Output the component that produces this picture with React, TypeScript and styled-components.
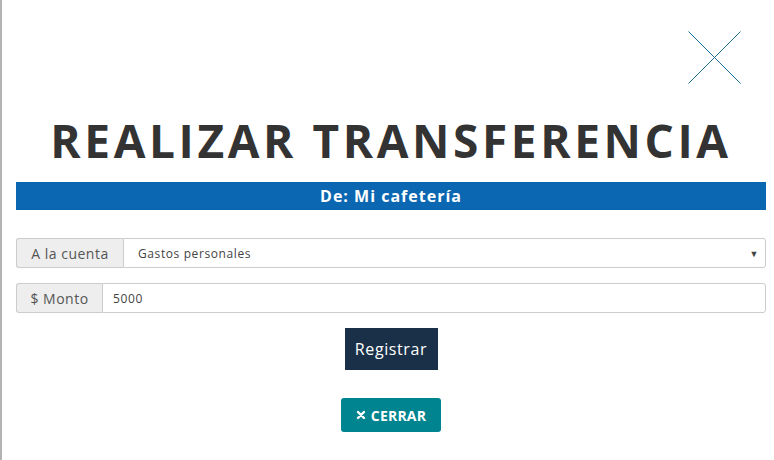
import React from "react";
import styled, { createGlobalStyle } from "styled-components";

const Global = createGlobalStyle`
  html, body { margin: 0; padding: 0; background: #fff; }
  body { font-family: "Open Sans", "Liberation Sans", sans-serif; }
  * { box-sizing: border-box; }
`;

const Page = styled.div`
  height: 460px;
  border-left: 2px solid #b3b3b3;
  padding: 0 8px 0 14px;
  display: flex;
  flex-direction: column;
`;

const TopBar = styled.div`
  display: flex;
  justify-content: flex-end;
  padding: 31px 25px 0 0;
  height: 84px;
`;

const CloseIcon = styled.svg`
  display: block;
  width: 53px;
  height: 53px;
`;

const Title = styled.h1`
  margin: 0;
  text-align: center;
  font-family: "Open Sans", sans-serif;
  font-weight: 700;
  font-size: 46px;
  line-height: 70px;
  color: #333;
  letter-spacing: 3.6px;
  height: 98px;
  padding-top: 21px;
  white-space: nowrap;
`;

const FromBar = styled.div`
  height: 28px;
  background: #0b67b2;
  color: #fff;
  font-family: "Open Sans", sans-serif;
  font-weight: 700;
  font-size: 16px;
  letter-spacing: 1px;
  display: flex;
  align-items: center;
  justify-content: center;
  margin-bottom: 28px;
`;

const Group = styled.div<{ $gap: number }>`
  display: flex;
  height: 30px;
  margin-bottom: ${(p) => p.$gap}px;
`;

const Addon = styled.div<{ $w: number }>`
  width: ${(p) => p.$w}px;
  flex: none;
  background: #eee;
  border: 1px solid #ccc;
  border-right: none;
  border-radius: 3px 0 0 3px;
  color: #555;
  font-size: 14px;
  letter-spacing: 0.5px;
  display: flex;
  align-items: center;
  justify-content: center;
`;

const Field = styled.div<{ $pl: number }>`
  flex: 1;
  border: 1px solid #ccc;
  border-radius: 0 3px 3px 0;
  display: flex;
  align-items: center;
  justify-content: space-between;
  padding: 0 6px 0 ${(p) => p.$pl}px;
  font-size: 12px;
  letter-spacing: 0.6px;
  color: #444;
`;

const Arrow = styled.span`
  font-size: 9px;
  color: #444;
`;

const Center = styled.div<{ $mb: number }>`
  display: flex;
  justify-content: center;
  margin-bottom: ${(p) => p.$mb}px;
`;

const Primary = styled.button`
  width: 93px;
  height: 42px;
  border: none;
  background: #1a3048;
  color: #fff;
  font-family: "Open Sans", sans-serif;
  font-size: 16px;
  letter-spacing: 0.6px;
  padding: 0;
`;

const Teal = styled.button`
  width: 100px;
  height: 34px;
  border: none;
  border-radius: 3px;
  background: #00848f;
  color: #fff;
  font-family: "Open Sans", sans-serif;
  font-weight: 700;
  font-size: 14px;
  letter-spacing: 0.2px;
  display: flex;
  align-items: center;
  justify-content: center;
  gap: 5px;
  padding: 0;
`;

export default function App() {
  return (
    <>
      <Global />
      <Page>
        <TopBar>
          <CloseIcon viewBox="0 0 53 53">
            <line x1="0.5" y1="0.5" x2="52.5" y2="52.5" stroke="#1a6f9b" strokeWidth="1" />
            <line x1="52.5" y1="0.5" x2="0.5" y2="52.5" stroke="#1a6f9b" strokeWidth="1" />
          </CloseIcon>
        </TopBar>
        <Title>REALIZAR TRANSFERENCIA</Title>
        <FromBar>De: Mi cafetería</FromBar>
        <Group $gap={15}>
          <Addon $w={107}>A la cuenta</Addon>
          <Field $pl={14}>
            <span>Gastos personales</span>
            <Arrow>▼</Arrow>
          </Field>
        </Group>
        <Group $gap={15}>
          <Addon $w={86}>$ Monto</Addon>
          <Field $pl={10}>
            <span>5000</span>
          </Field>
        </Group>
        <Center $mb={28}>
          <Primary>Registrar</Primary>
        </Center>
        <Center $mb={0}>
          <Teal>
            <svg width="10" height="10" viewBox="0 0 10 10">
              <path d="M2 2 L8 8 M8 2 L2 8" stroke="#fff" strokeWidth="2.4" strokeLinecap="round" />
            </svg>
            CERRAR
          </Teal>
        </Center>
      </Page>
    </>
  );
}
